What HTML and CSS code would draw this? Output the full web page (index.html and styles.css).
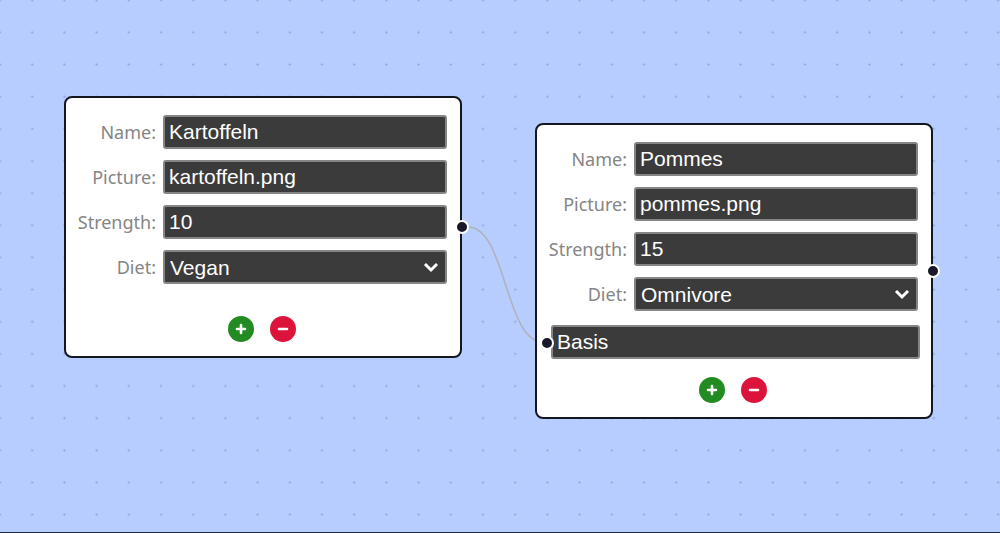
FILE: index.html
```html
<!DOCTYPE html>
<html lang="en">
<head>
<meta charset="utf-8">
<title>Node editor</title>
<link rel="stylesheet" href="styles.css">
</head>
<body>
<main class="canvas">
  <svg class="layer" aria-hidden="true">
    <defs>
      <pattern id="dots" width="32.2" height="32.15" patternUnits="userSpaceOnUse" x="-16.1" y="-15.9">
        <circle cx="16.1" cy="16.1" r="1.1" fill="#8fa2d4"/>
      </pattern>
    </defs>
    <rect width="100%" height="100%" fill="url(#dots)"/>
    <path d="M468 227C506 227 505 342 543 342" fill="none" stroke="#b1b1b7" stroke-width="1.5"/>
  </svg>

  <section class="node node-source" aria-label="Kartoffeln">
    <div class="fields">
      <label for="name1">Name:</label>
      <input class="control" id="name1" type="text" value="Kartoffeln">
      <label for="pic1">Picture:</label>
      <input class="control" id="pic1" type="text" value="kartoffeln.png">
      <label for="str1">Strength:</label>
      <input class="control" id="str1" type="text" inputmode="numeric" value="10">
      <label for="diet1">Diet:</label>
      <div class="select">
        <select class="control" id="diet1"><option>Vegan</option><option>Omnivore</option></select>
        <svg class="chevron" viewBox="0 0 16 11" aria-hidden="true"><path d="M2 2l6 6 6-6"/></svg>
      </div>
    </div>
    <div class="actions">
      <button class="round add" type="button" aria-label="Add input"><svg viewBox="0 0 26 26"><path d="M13 9v8M9 13h8"/></svg></button>
      <button class="round remove" type="button" aria-label="Remove input"><svg viewBox="0 0 26 26"><path d="M9 13h8"/></svg></button>
    </div>
    <span class="handle handle-out"></span>
  </section>

  <section class="node node-target" aria-label="Pommes">
    <div class="fields">
      <label for="name2">Name:</label>
      <input class="control" id="name2" type="text" value="Pommes">
      <label for="pic2">Picture:</label>
      <input class="control" id="pic2" type="text" value="pommes.png">
      <label for="str2">Strength:</label>
      <input class="control" id="str2" type="text" inputmode="numeric" value="15">
      <label for="diet2">Diet:</label>
      <div class="select">
        <select class="control" id="diet2"><option>Omnivore</option><option>Vegan</option></select>
        <svg class="chevron" viewBox="0 0 16 11" aria-hidden="true"><path d="M2 2l6 6 6-6"/></svg>
      </div>
    </div>
    <div class="slot">
      <input class="control" type="text" value="Basis" aria-label="Input name">
      <span class="handle handle-in"></span>
    </div>
    <div class="actions">
      <button class="round add" type="button" aria-label="Add input"><svg viewBox="0 0 26 26"><path d="M13 9v8M9 13h8"/></svg></button>
      <button class="round remove" type="button" aria-label="Remove input"><svg viewBox="0 0 26 26"><path d="M9 13h8"/></svg></button>
    </div>
    <span class="handle handle-out"></span>
  </section>
</main>
</body>
</html>
```

FILE: styles.css
```css
* {
  box-sizing: border-box;
}

body {
  margin: 0;
}

.canvas {
  position: relative;
  min-height: 100vh;
  overflow: hidden;
  background: #b7cdff;
  border-bottom: 1px solid #222936;
  font-family: "Liberation Sans", Arial, sans-serif;
}

.layer {
  position: absolute;
  inset: 0;
  width: 100%;
  height: 100%;
}

.node {
  position: absolute;
  width: 398px;
  padding: 17px 13px 14px 11px;
  background: #fff;
  border: 2px solid #15171f;
  border-radius: 8px;
}

.node-source {
  left: 64px;
  top: 96px;
}

.node-target {
  left: 535px;
  top: 123px;
}

.fields {
  display: grid;
  grid-template-columns: auto 284px;
  justify-content: end;
  align-items: center;
  gap: 11px 7px;
}

.fields label {
  color: #858585;
  font: 18px/24px "Noto Sans", "Segoe UI", sans-serif;
  text-align: right;
}

.control {
  display: block;
  width: 100%;
  height: 34px;
  margin: 0;
  padding: 0 4px;
  border: 2px solid #858585;
  border-radius: 3px;
  background: #3b3b3b;
  color: #fff;
  font: 21px "Liberation Sans", Arial, sans-serif;
}

.select {
  position: relative;
}

.select .control {
  appearance: none;
  padding: 0 5px;
}

.chevron {
  position: absolute;
  right: 8px;
  top: 12px;
  width: 16px;
  height: 11px;
  fill: none;
  stroke: #fff;
  stroke-width: 3;
  pointer-events: none;
}

.slot {
  position: relative;
  margin: 14px -2px 0 3px;
}

.actions {
  display: flex;
  justify-content: center;
  gap: 16px;
  margin-top: 32px;
}

.slot + .actions {
  margin-top: 18px;
}

.round {
  width: 26px;
  height: 26px;
  padding: 0;
  border: 0;
  border-radius: 50%;
}

.round svg {
  display: block;
  fill: none;
  stroke: #fff;
  stroke-width: 2.6;
  stroke-linecap: round;
}

.add {
  background: #228b22;
}

.remove {
  background: #dc143c;
}

.handle {
  position: absolute;
  width: 14px;
  height: 14px;
  border: 2px solid #fff;
  border-radius: 50%;
  background: #1a192b;
}

.handle-out {
  top: 50%;
  right: -9px;
  transform: translateY(-50%);
}

.handle-in {
  top: 11px;
  left: -11px;
}
```
